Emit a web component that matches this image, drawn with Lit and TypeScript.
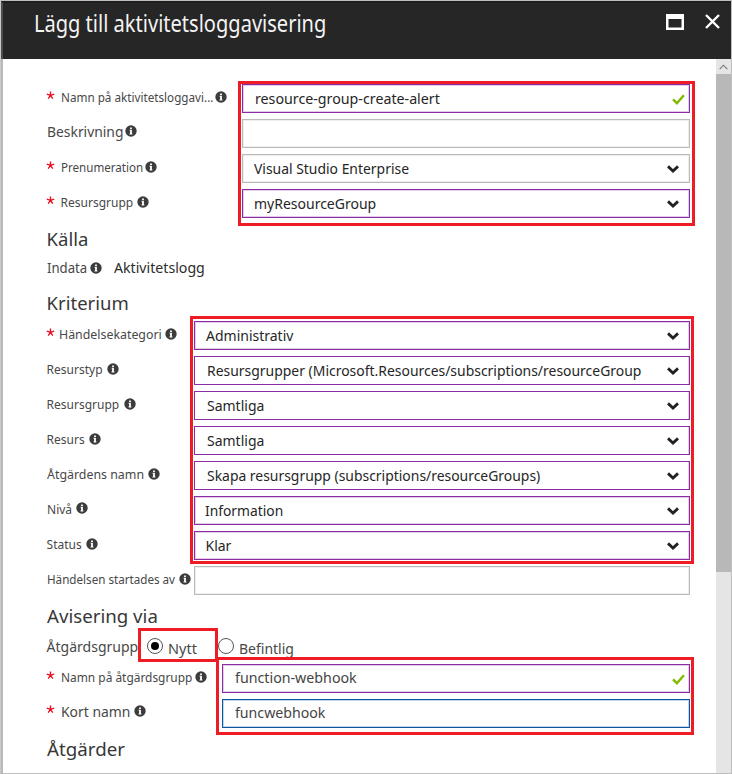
import { LitElement, html, css, svg, nothing } from "lit";
import { customElement, property, state } from "lit/decorators.js";
import { styleMap } from "lit/directives/style-map.js";

/** One line of text condensed or widened to a set measure. */
@customElement("fit-text")
class FitText extends LitElement {
  @property() text = "";
  @property({ type: Number }) measure = 0;
  @state() private ratio = 1;

  static styles = css`
    :host { display: block; flex: none; white-space: nowrap; }
    .box { overflow: visible; }
    .run { display: inline-block; transform-origin: 0 50%; }
  `;

  firstUpdated() {
    const run = this.renderRoot.querySelector(".run") as HTMLElement;
    if (run.offsetWidth) this.ratio = this.measure / run.offsetWidth;
  }

  render() {
    return html`<div class="box" style=${styleMap({ width: `${this.measure}px` })}><span class="run" style=${styleMap({ transform: `scaleX(${this.ratio})` })}>${this.text}</span></div>`;
  }
}

interface Row {
  label: string;
  w: number;
  gap: number;
  size?: "m" | "l";
  req?: number;
  dy?: number;
  value?: string;
  vw?: number;
  pad?: number;
  icon?: "check" | "chevron";
  tone: "purple" | "gray" | "blue";
  soft?: boolean;
}

const NAMES: Row[] = [
  { label: "Namn på aktivitetsloggavi...", w: 152, gap: 2, req: 14, dy: -1, value: "resource-group-create-alert", vw: 185, pad: 12, icon: "check", tone: "purple" },
  { label: "Beskrivning", w: 76, gap: 2, size: "l", dy: -3, tone: "gray" },
  { label: "Prenumeration", w: 82, gap: 2.4, req: 14, dy: -1, value: "Visual Studio Enterprise", vw: 155, pad: 11, icon: "chevron", tone: "gray" },
  { label: "Resursgrupp", w: 73, gap: 3, req: 14, dy: -1, value: "myResourceGroup", vw: 122, pad: 11, icon: "chevron", tone: "purple" },
];

const CRITERIA: Row[] = [
  { label: "Händelsekategori", w: 103, gap: 3.4, req: 12, dy: -1, value: "Administrativ", vw: 87, pad: 11, icon: "chevron", tone: "purple" },
  { label: "Resurstyp", w: 56, gap: 4, dy: -1, value: "Resursgrupper (Microsoft.Resources/subscriptions/resourceGroup", vw: 434, pad: 12, icon: "chevron", tone: "purple", soft: true },
  { label: "Resursgrupp", w: 73, gap: 4, dy: -1, value: "Samtliga", vw: 57, pad: 12, icon: "chevron", tone: "purple", soft: true },
  { label: "Resurs", w: 38, gap: 4, dy: -1, value: "Samtliga", vw: 57, pad: 12, icon: "chevron", tone: "purple", soft: true },
  { label: "Åtgärdens namn", w: 97, gap: 4, dy: -1, value: "Skapa resursgrupp (subscriptions/resourceGroups)", vw: 333, pad: 12, icon: "chevron", tone: "purple", soft: true },
  { label: "Nivå", w: 25, gap: 4, size: "m", dy: -3, value: "Information", vw: 78, pad: 10.5, icon: "chevron", tone: "purple" },
  { label: "Status", w: 35, gap: 4, dy: -1, value: "Klar", vw: 26, pad: 10.5, icon: "chevron", tone: "purple" },
  { label: "Händelsen startades av", w: 128, gap: 4, dy: -1, tone: "gray" },
];

const ACTION: Row[] = [
  { label: "Namn på åtgärdsgrupp", w: 131, gap: 3, req: 14, dy: -1, value: "function-webhook", vw: 122, pad: 12, icon: "check", tone: "purple" },
  { label: "Kort namn", w: 69, gap: 4, req: 14, size: "l", dy: -3, value: "funcwebhook", vw: 90, pad: 12, tone: "blue" },
];

const chevron = html`<svg class="chevron" width="12" height="8" viewBox="0 0 12 8">${svg`<path d="M1 1.4 6 6 11 1.4" fill="none" stroke="#222" stroke-width="2.8"/>`}</svg>`;
const check = html`<svg class="check" width="13" height="11" viewBox="0 0 13 11">${svg`<path d="M1 5.4 4.9 9.2 11.9 1.2" fill="none" stroke="#7fba00" stroke-width="2.4"/>`}</svg>`;
const star = html`<svg class="star" width="9" height="9" viewBox="0 0 9 9">${svg`<path d="M4.5 4.4V.5M4.5 4.4.8 3.2M4.5 4.4 8.2 3.2M4.5 4.4 2.2 7.7M4.5 4.4 6.8 7.7" fill="none" stroke="#e81123" stroke-width="1.4"/>`}</svg>`;
const info = html`<svg class="info" width="12" height="12" viewBox="0 0 12 12">${svg`<circle cx="6" cy="6" r="5.7" fill="#3c3c3c"/><path d="M5.1 2.5h1.8V4H5.1zM4.6 4.8h2.3v3.7h.5v.9H4.5v-.9h.6V5.7h-.5z" fill="#fff"/>`}</svg>`;

@customElement("app-root")
class AppRoot extends LitElement {
  static styles = css`
    :host {
      display: block;
      width: 732px;
      height: 774px;
      overflow: hidden;
      font-family: "Noto Sans", "Open Sans", sans-serif;
      color: #262626;
    }
    .blade {
      box-sizing: border-box;
      height: 774px;
      border: 1px solid #bcbfbe;
      border-left-color: #c9c9c9;
      display: flex;
      flex-direction: column;
      background: #fff;
    }
    .head {
      box-sizing: border-box;
      height: 58px;
      flex: none;
      background: #262626;
      border-top: 2px solid #1c1f1e;
      border-left: 2px solid #4c4f4e;
      display: flex;
      padding: 0 9px 0 31px;
      color: #f4f4f4;
    }
    .title { font-size: 23px; line-height: 40px; height: 40px; flex: 1; }
    .win { margin: 11px 21px 0 0; flex: none; }
    .close { margin: 11px 2px 0 0; flex: none; }
    .main { flex: 1; display: flex; min-height: 0; }
    .edge { width: 2px; background: #b9b9b9; flex: none; }
    .form { flex: 1; padding: 22px 26px 0 43.6px; min-width: 0; }
    .scroll { width: 15px; flex: none; background: #e5e5e5; }
    .up { height: 15px; display: flex; align-items: center; justify-content: center; }
    .thumb { height: 498px; background: #b8b8b8; }
    .group, .marked { position: relative; }
    .row { display: flex; height: 35px; align-items: center; }
    .label { display: flex; align-items: center; flex: none; color: #484848; font-size: 12px; line-height: 18px; }
    .names .label { width: 195.4px; }
    .criteria .label { width: 147.4px; }
    .action .label { width: 175.4px; }
    .label.m { font-size: 13px; }
    .label.l { font-size: 13.5px; }
    .shift { display: flex; align-items: center; }
    .star { margin: -6px 0 0 -1px; flex: none; overflow: visible; }
    .req { display: flex; }
    .lift { margin-top: -2px; flex: none; display: flex; }
    .info { flex: none; }
    .field {
      box-sizing: border-box;
      height: 29px;
      flex: 1;
      min-width: 0;
      display: flex;
      align-items: center;
      border: 1px solid;
      background: #fff;
      font-size: 14px;
      line-height: 20px;
    }
    .field.purple { border-color: #8a2da5; box-shadow: inset 0 0 0 1px #e4cbea; }
    .field.soft { box-shadow: inset -1px 0 0 #e4cbea; }
    .field.gray { border-color: #bababa; box-shadow: inset 0 0 0 1px #eee; }
    .field.blue { border-color: #0c56a0; box-shadow: inset 0 0 0 1px #c3d6e9; }
    .action .field { color: #444; }
    .action .field fit-text { margin-top: -2px; }
    .grow { flex: 1; min-width: 0; }
    .chevron { margin: 1px 10px 0 0; flex: none; }
    .check { margin: 2px 4px 0 0; flex: none; }
    .h { font-size: 18.5px; line-height: 36px; height: 36px; color: #383838; }
    .source { display: flex; height: 23px; align-items: center; font-size: 13.5px; color: #484848; line-height: 20px; }
    .source fit-text { margin-top: -2px; }
    .source .value { margin-left: 12.5px; color: #2c2c2c; font-size: 14px; }
    .kriterium { height: 38px; line-height: 45px; }
    .mark { position: absolute; box-sizing: border-box; border: 3px solid #ee1c25; pointer-events: none; }
    .names .mark { left: 191.4px; top: 0; right: -5px; height: 145px; }
    .criteria .mark { left: 143.4px; top: -2px; right: -4px; height: 248px; }
    .action .mark { left: 169.4px; top: -4px; right: -4px; height: 78px; }
    .radios { display: flex; height: 27px; align-items: center; font-size: 14px; line-height: 20px; color: #484848; }
    .radios > fit-text { margin-top: -1px; }
    .marked { display: flex; align-items: center; margin-left: 8.4px; width: 71px; }
    .marked .mark { left: -9px; top: -8px; width: 80px; height: 34px; }
    .radio { box-sizing: border-box; width: 16px; height: 16px; border: 1px solid #555; border-radius: 50%; display: flex; align-items: center; justify-content: center; margin: -3px 5px 0 0; flex: none; background: #fff; }
    .dot { width: 8px; height: 8px; border-radius: 50%; background: #000; }
    .opt { margin-top: 3px; }
  `;

  private row(r: Row) {
    return html`<div class="row">
      <div class="label ${r.size ?? ""}">
        <div class="shift" style=${styleMap({ marginTop: `${r.dy ?? 0}px` })}>
          ${r.req ? html`<div class="req" style=${styleMap({ width: `${r.req}px` })}>${star}</div>` : nothing}
          <fit-text text=${r.label} measure=${r.w}></fit-text>
          <div class="lift" style=${styleMap({ marginLeft: `${r.gap}px` })}>${info}</div>
        </div>
      </div>
      <div class="field ${r.tone} ${r.soft ? "soft" : ""}">
        <div class="grow" style=${styleMap({ paddingLeft: `${r.pad ?? 0}px` })}>
          ${r.value ? html`<fit-text text=${r.value} measure=${r.vw ?? 0}></fit-text>` : nothing}
        </div>
        ${r.icon === "check" ? check : r.icon === "chevron" ? chevron : nothing}
      </div>
    </div>`;
  }

  render() {
    return html`<div class="blade">
      <div class="head">
        <div class="title"><fit-text text="Lägg till aktivitetsloggavisering" measure="292"></fit-text></div>
        <svg class="win" width="18" height="16" viewBox="0 0 18 16"><path d="M0 0h18v16H0zM2.5 5v8.5h13V5z" fill="#fff" fill-rule="evenodd"/></svg>
        <svg class="close" width="15" height="15" viewBox="0 0 15 15"><path d="M1 1 14 14M14 1 1 14" stroke="#fff" stroke-width="2.4"/></svg>
      </div>
      <div class="main">
        <div class="edge"></div>
        <div class="form">
          <div class="group names">${NAMES.map((r) => this.row(r))}<div class="mark"></div></div>
          <div class="h"><fit-text text="Källa" measure="42"></fit-text></div>
          <div class="source">
            <fit-text text="Indata" measure="40"></fit-text>
            <div class="lift" style=${styleMap({ marginLeft: "3.4px" })}>${info}</div>
            <div class="value"><fit-text text="Aktivitetslogg" measure="91"></fit-text></div>
          </div>
          <div class="h kriterium"><fit-text text="Kriterium" measure="82"></fit-text></div>
          <div class="group criteria">${CRITERIA.map((r) => this.row(r))}<div class="mark"></div></div>
          <div class="h"><fit-text text="Avisering via" measure="111"></fit-text></div>
          <div class="radios">
            <fit-text text="Åtgärdsgrupp" measure="92"></fit-text>
            <div class="marked">
              <span class="radio"><span class="dot"></span></span>
              <div class="opt"><fit-text text="Nytt" measure="29"></fit-text></div>
              <div class="mark"></div>
            </div>
            <span class="radio"></span>
            <div class="opt"><fit-text text="Befintlig" measure="55"></fit-text></div>
          </div>
          <div class="group action">${ACTION.map((r) => this.row(r))}<div class="mark"></div></div>
          <div class="h"><fit-text text="Åtgärder" measure="78"></fit-text></div>
        </div>
        <div class="scroll">
          <div class="up"><svg width="9" height="6" viewBox="0 0 9 6"><path d="M.7 5.2 4.5 1.2 8.3 5.2" fill="none" stroke="#777" stroke-width="1.1"/></svg></div>
          <div class="thumb"></div>
        </div>
      </div>
    </div>`;
  }
}
